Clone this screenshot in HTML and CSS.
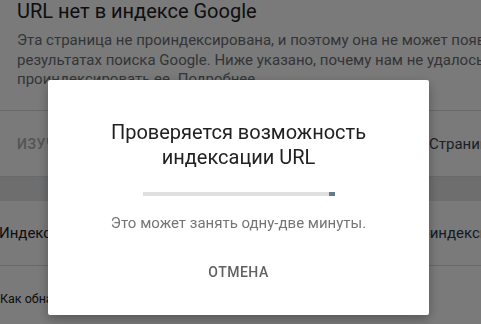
FILE: index.html
```html
<!DOCTYPE html>
<html lang="ru">
<head>
    <meta charset="UTF-8">
    <meta name="viewport" content="width=device-width, initial-scale=1.0">
    <title>Проверка URL</title>
    <link rel="stylesheet" href="styles.css">
</head>
<body>
    <div class="page">
        <div class="verdict">
            <h1 class="verdict-title">URL нет в индексе Google</h1>
            <p class="verdict-text">Эта страница не проиндексирована, и поэтому она не может появиться в<br>результатах поиска Google. Ниже указано, почему нам не удалось<br>проиндексировать ее. Подробнее</p>
        </div>
        <div class="actions-row">
            <span class="action-link">Изучить просканированную страницу</span>
            <span class="action-value">Страница не проиндексирована</span>
        </div>
        <div class="band"></div>
        <div class="info-row">
            <span class="info-label">Индексирование разрешено?</span>
            <span class="info-value">Проиндексировано</span>
        </div>
        <div class="info-row small">
            <span class="info-label">Как обнаружен URL</span>
        </div>
    </div>

    <div class="overlay">
        <div class="dialog">
            <div class="dialog-title">Проверяется возможность<br>индексации URL</div>
            <div class="progress">
                <div class="progress-bar"></div>
            </div>
            <div class="dialog-text">Это может занять одну-две минуты.</div>
            <button class="dialog-btn">Отмена</button>
        </div>
    </div>
</body>
</html>
```

FILE: styles.css
```css
body {
    font-family: Roboto, "Noto Sans", sans-serif;
    background: #fff;
    color: #212121;
    margin: 0;
    padding: 0;
    overflow: hidden;
    height: 324px;
}
.page {
    width: 481px;
    white-space: nowrap;
    overflow: hidden;
}
.verdict {
    padding: 0 0 0 17px;
    height: 111px;
    border-bottom: 1px solid #dadce0;
    box-sizing: border-box;
    overflow: hidden;
}
.verdict-title {
    margin: -2px 0 0 0;
    font-size: 20px;
    font-weight: 400;
    line-height: 26px;
    color: #202124;
}
.verdict-text {
    margin: 7px 0 0 0;
    font-size: 15px;
    line-height: 19.5px;
    color: #6b6f73;
}
.actions-row {
    display: flex;
    align-items: center;
    height: 65px;
    border-bottom: 1px solid #dadce0;
}
.action-link {
    flex: none;
    width: 412px;
    padding-left: 17px;
    font-size: 14px;
    font-weight: 500;
    text-transform: uppercase;
    letter-spacing: 0.6px;
    color: #b0b0b0;
    overflow: hidden;
}
.action-value {
    flex: none;
    font-size: 15px;
    color: #3c4650;
}
.band {
    height: 24px;
    background: #e6e7e9;
}
.info-row {
    display: flex;
    align-items: center;
    height: 64px;
    border-bottom: 1px solid #dadce0;
    font-size: 15px;
}
.info-label {
    flex: none;
    width: 403px;
    margin-left: -1px;
    overflow: hidden;
    color: #202124;
}
.info-value {
    flex: none;
    color: #2c3a48;
}
.info-row.small {
    border-bottom: none;
    font-size: 12.5px;
}
.info-row.small .info-label {
    margin-left: 0;
}
.overlay {
    position: fixed;
    inset: 0;
    background: rgba(0, 0, 0, 0.52);
    display: flex;
    justify-content: center;
    align-items: flex-start;
    padding: 80px 4px 0 0;
}
.dialog {
    width: 381px;
    height: 235px;
    background: #fff;
    border-radius: 2px;
    box-shadow: 0 4px 12px rgba(0, 0, 0, 0.3);
    display: flex;
    flex-direction: column;
    align-items: center;
    box-sizing: border-box;
    padding-top: 40px;
}
.dialog-title {
    font-size: 20px;
    line-height: 25px;
    color: #212121;
    text-align: center;
}
.progress {
    margin-top: 22px;
    width: 192px;
    height: 4px;
    background: #e0e0e0;
    display: flex;
    justify-content: flex-end;
}
.progress-bar {
    width: 6px;
    background: #607d8b;
}
.dialog-text {
    margin-top: 18px;
    font-size: 15px;
    color: #757575;
}
.dialog-btn {
    margin-top: 24px;
    border: none;
    background: none;
    font-family: inherit;
    font-size: 14px;
    font-weight: 500;
    text-transform: uppercase;
    letter-spacing: 0.5px;
    color: #616161;
    padding: 8px 12px;
    cursor: pointer;
}
```
